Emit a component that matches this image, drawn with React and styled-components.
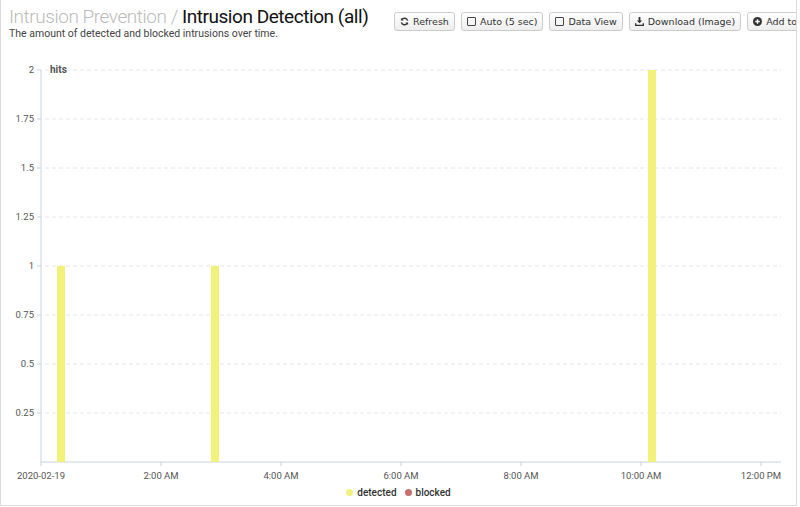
import React from "react";
import styled, { createGlobalStyle } from "styled-components";

const Global = createGlobalStyle`
  body { margin: 0; background: #fff; font-family: Roboto, sans-serif; }
`;
const Panel = styled.div`
  width: 797px; height: 506px; border: 1px solid #dcdcdc; border-top: none; box-sizing: border-box;
  overflow: hidden; display: flex; flex-direction: column;
`;
const Header = styled.div`
  display: flex; align-items: flex-start; padding: 5px 0 0 8px; height: 40px; box-sizing: border-box; white-space: nowrap;
`;
const Titles = styled.div` width: 385px; flex: none; `;
const Title = styled.div`
  font-family: Roboto, sans-serif; font-size: 19px; line-height: 24px; color: #111; letter-spacing: -0.45px;
`;
const Crumb = styled.span` color: #bbb; font-weight: 300; `;
const Sub = styled.div` font-size: 10.5px; color: #444; line-height: 12px; margin-top: -1px; `;
const Buttons = styled.div` display: flex; gap: 6px; margin-top: 7px; `;
const Btn = styled.div`
  display: flex; align-items: center; gap: 4px; height: 19px; padding: 0 5px; box-sizing: border-box;
  border: 1px solid #ccc; border-radius: 3px; background: linear-gradient(#fff, #eee);
  font-family: "DejaVu Sans", sans-serif; font-size: 9.5px; color: #333; flex: none;
`;
const Box = styled.span` width: 7px; height: 7px; border: 1px solid #444; border-radius: 1px; `;
const Legend = styled.div`
  display: flex; justify-content: center; gap: 8px; font-size: 10px; font-weight: 500; color: #333; margin-top: -13px;
`;
const Item = styled.span` display: flex; align-items: center; gap: 4px; `;
const Dot = styled.span` width: 7px; height: 7px; border-radius: 50%; background: ${p => p.c}; `;

const y0 = 422, step = 49;
const ticks = ["0.25","0.5","0.75","1","1.25","1.5","1.75","2"];
const xl = [["2020-02-19",40],["2:00 AM",160],["4:00 AM",280],["6:00 AM",400],["8:00 AM",520],["10:00 AM",640],["12:00 PM",760]];
const bars = [[56,1],[210,1],[647,2]];

export default function App() {
  return (
    <Panel>
      <Global />
      <Header>
        <Titles>
          <Title><Crumb>Intrusion Prevention / </Crumb>Intrusion Detection (all)</Title>
          <Sub>The amount of detected and blocked intrusions over time.</Sub>
        </Titles>
        <Buttons>
          <Btn><svg width="9" height="9" viewBox="0 0 10 10"><path d="M8.5 4A3.6 3.6 0 0 0 2 3M1.5 6A3.6 3.6 0 0 0 8 7" stroke="#333" strokeWidth="1.6" fill="none"/><path d="M1 1v3h3zM9 9V6H6z" fill="#333"/></svg>Refresh</Btn>
          <Btn><Box />Auto (5 sec)</Btn>
          <Btn><Box />Data View</Btn>
          <Btn><svg width="9" height="9" viewBox="0 0 10 10"><path d="M4 0h2v4h2L5 7 2 4h2zM0 7h1.5v1.5h7V7H10v3H0z" fill="#333"/></svg>Download (Image)</Btn>
          <Btn><svg width="9" height="9" viewBox="0 0 10 10"><circle cx="5" cy="5" r="5" fill="#333"/><path d="M5 2.5v5M2.5 5h5" stroke="#fff" strokeWidth="1.5"/></svg>Add to Dashboard</Btn>
        </Buttons>
      </Header>
      <svg width="797" height="460" style={{ display: "block", flex: "none" }}>
        {ticks.map((t, i) => {
          const y = y0 - step * (i + 1);
          return (
            <g key={t}>
              <line x1="44" x2="780" y1={y} y2={y} stroke="#e6e6e6" strokeDasharray="4 3" />
              <line x1="36" x2="40" y1={y} y2={y} stroke="#c6d4e4" />
              <text x="33" y={y + 3} textAnchor="end" fontSize="9.5" fill="#555" fontFamily="Roboto">{t}</text>
            </g>
          );
        })}
        <text x="49" y={y0 - 8 * step + 3} fontSize="10" fontWeight="700" fill="#555" fontFamily="Roboto">hits</text>
        <line x1="40" x2="40" y1={y0 - 8 * step} y2={y0} stroke="#c6d4e4" />
        <line x1="40" x2="780" y1={y0} y2={y0} stroke="#c6d4e4" />
        {bars.map(([x, v]) => <rect key={x} x={x} y={y0 - v * 4 * step} width="8" height={v * 4 * step} fill="#f2f27a" />)}
        {xl.map(([t, x]) => (
          <g key={t}>
            <line x1={x} x2={x} y1={y0} y2={y0 + 4} stroke="#c6d4e4" />
            <text x={x} y={y0 + 17} textAnchor="middle" fontSize="9.5" fill="#555" fontFamily="Roboto">{t}</text>
          </g>
        ))}
      </svg>
      <Legend>
        <Item><Dot c="#f2f27a" />detected</Item>
        <Item><Dot c="#c87070" />blocked</Item>
      </Legend>
    </Panel>
  );
}
